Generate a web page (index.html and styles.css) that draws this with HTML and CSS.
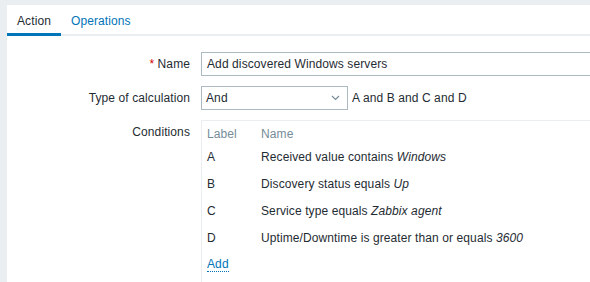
FILE: index.html
```html
<!DOCTYPE html>
<html lang="en">
<head>
  <meta charset="UTF-8">
  <title>Action</title>
  <link rel="stylesheet" href="styles.css">
</head>
<body>
  <div class="panel">
    <div class="tabs">
      <div class="tab active-tab">Action</div>
      <div class="tab">Operations</div>
    </div>

    <div class="form">
      <div class="form-row">
        <label class="form-label"><span class="required">*</span> Name</label>
        <div class="form-field">
          <div class="text-input">Add discovered Windows servers</div>
        </div>
      </div>

      <div class="form-row">
        <label class="form-label">Type of calculation</label>
        <div class="form-field">
          <div class="select">
            <span>And</span>
            <svg class="chevron" width="9" height="6" viewBox="0 0 9 6">
              <path d="M1 1 L4.5 4.5 L8 1" fill="none" stroke="#768d99" stroke-width="1.2"/>
            </svg>
          </div>
          <span class="formula">A and B and C and D</span>
        </div>
      </div>

      <div class="form-row top">
        <label class="form-label conditions-label">Conditions</label>
        <div class="form-field">
          <div class="conditions">
            <table>
              <thead>
                <tr><th class="col-label">Label</th><th>Name</th></tr>
              </thead>
              <tbody>
                <tr><td>A</td><td>Received value contains <em>Windows</em></td></tr>
                <tr><td>B</td><td>Discovery status equals <em>Up</em></td></tr>
                <tr><td>C</td><td>Service type equals <em>Zabbix agent</em></td></tr>
                <tr><td>D</td><td>Uptime/Downtime is greater than or equals <em>3600</em></td></tr>
              </tbody>
            </table>
            <a class="link-action" href="#">Add</a>
          </div>
        </div>
      </div>
    </div>
  </div>
</body>
</html>
```

FILE: styles.css
```css
* {
  margin: 0;
  padding: 0;
  box-sizing: border-box;
}

body {
  font-family: 'Liberation Sans', Arial, sans-serif;
  font-size: 12px;
  line-height: 14px;
  letter-spacing: 0.1px;
  color: #1f2c33;
  background-color: #ebeef0;
  overflow: hidden;
}

.panel {
  margin: 5px 0 0 7px;
  width: 640px;
  height: 300px;
  background-color: #fff;
}

/* Tabs */
.tabs {
  display: flex;
  border-bottom: 2px solid #ebeef0;
}

.tab {
  padding: 9px 10px 5px;
  color: #0275b8;
  border-bottom: 3px solid transparent;
  margin-bottom: -2px;
}

.active-tab {
  color: #1f2c33;
  border-bottom-color: #0275b8;
}

/* Form */
.form {
  padding-top: 16px;
  display: flex;
  flex-direction: column;
  gap: 10px;
}

.form-row {
  display: grid;
  grid-template-columns: 183px 1fr;
  column-gap: 11px;
  align-items: center;
}

.form-row.top {
  align-items: start;
}

.form-label {
  text-align: right;
}

.conditions-label {
  padding-top: 5px;
}

.required {
  color: #d40000;
}

.form-field {
  display: flex;
  align-items: center;
}

.text-input {
  width: 420px;
  height: 24px;
  padding: 4px 5px;
  border: 1px solid #acbbc2;
}

.select {
  width: 147px;
  height: 24px;
  padding: 4px 4px;
  border: 1px solid #acbbc2;
  display: flex;
  justify-content: space-between;
  align-items: center;
}

.chevron {
  margin-right: 3px;
}

.formula {
  margin-left: 4px;
}

/* Conditions */
.conditions {
  width: 420px;
  height: 180px;
  border: 1px solid #ebeef0;
  padding: 5px 5px;
}

.conditions table {
  border-collapse: collapse;
}

.conditions th {
  text-align: left;
  font-weight: normal;
  color: #768d99;
  padding: 1px 0 2px;
  height: 17px;
}

.conditions td {
  height: 27px;
  padding: 0;
}

.col-label {
  width: 54px;
}

.conditions em {
  font-style: italic;
}

.link-action {
  display: inline-block;
  margin-top: 6px;
  color: #0275b8;
  text-decoration: none;
  border-bottom: 1px dotted #0275b8;
  line-height: 14px;
}
```
